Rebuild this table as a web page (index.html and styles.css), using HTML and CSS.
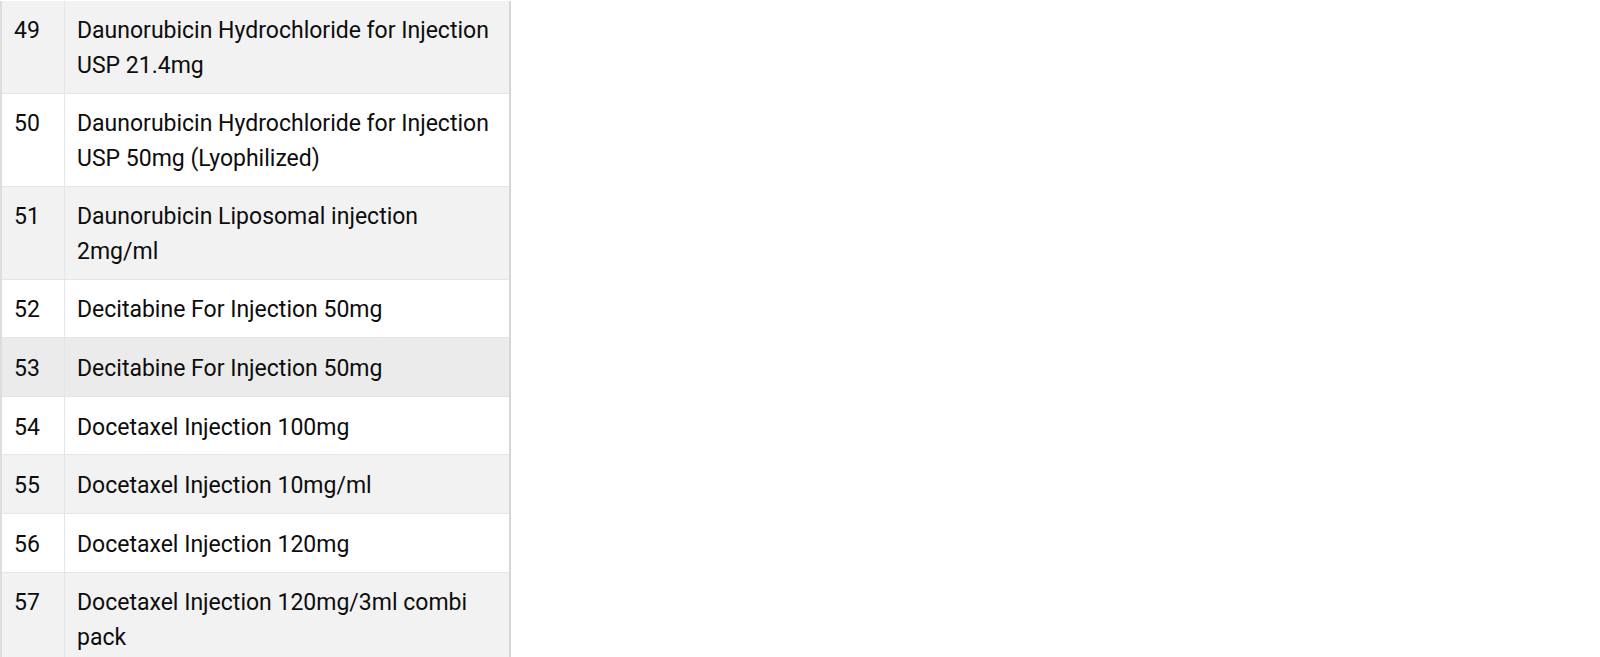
FILE: index.html
```html
<!DOCTYPE html>
<html>
<head>
<meta charset="utf-8">
<link rel="stylesheet" href="styles.css">
</head>
<body>
<div class="wrap">
<table class="list">
<tbody>
<tr class="odd"><td class="num">49</td><td class="name">Daunorubicin Hydrochloride for Injection USP 21.4mg</td></tr>
<tr class="even"><td class="num">50</td><td class="name">Daunorubicin Hydrochloride for Injection USP 50mg (Lyophilized)</td></tr>
<tr class="odd"><td class="num">51</td><td class="name">Daunorubicin Liposomal injection 2mg/ml</td></tr>
<tr class="even"><td class="num">52</td><td class="name">Decitabine For Injection 50mg</td></tr>
<tr class="odd hover"><td class="num">53</td><td class="name">Decitabine For Injection 50mg</td></tr>
<tr class="even"><td class="num">54</td><td class="name">Docetaxel Injection 100mg</td></tr>
<tr class="odd"><td class="num">55</td><td class="name">Docetaxel Injection 10mg/ml</td></tr>
<tr class="even"><td class="num">56</td><td class="name">Docetaxel Injection 120mg</td></tr>
<tr class="odd"><td class="num">57</td><td class="name">Docetaxel Injection 120mg/3ml combi pack</td></tr>
</tbody>
</table>
</div>
</body>
</html>
```
FILE: styles.css
```css
html, body {
  margin: 0;
  padding: 0;
  background: #ffffff;
}
body {
  font-family: Roboto, "Liberation Sans", sans-serif;
  font-size: 23px;
  color: #0d0d0d;
  overflow: hidden;
}
.wrap {
  width: 507px;
  margin-top: 0.6px;
  border-left: 2px solid #dddddd;
  border-right: 2px solid #d6d6d6;
}
.list {
  width: 100%;
  border-collapse: separate;
  border-spacing: 0;
}
.list td {
  padding: 13.8px 12px 9.4px;
  line-height: 34.4px;
  border-bottom: 1px solid #e3e5e9;
  vertical-align: top;
  text-align: left;
}
.list td.num {
  width: 38px;
  border-right: 1px solid #e3e5e9;
}
.list tr.odd td {
  background: #f2f2f2;
}
.list tr.even td {
  background: #ffffff;
}
.list tr.hover td {
  background: #ebebeb;
}
```
